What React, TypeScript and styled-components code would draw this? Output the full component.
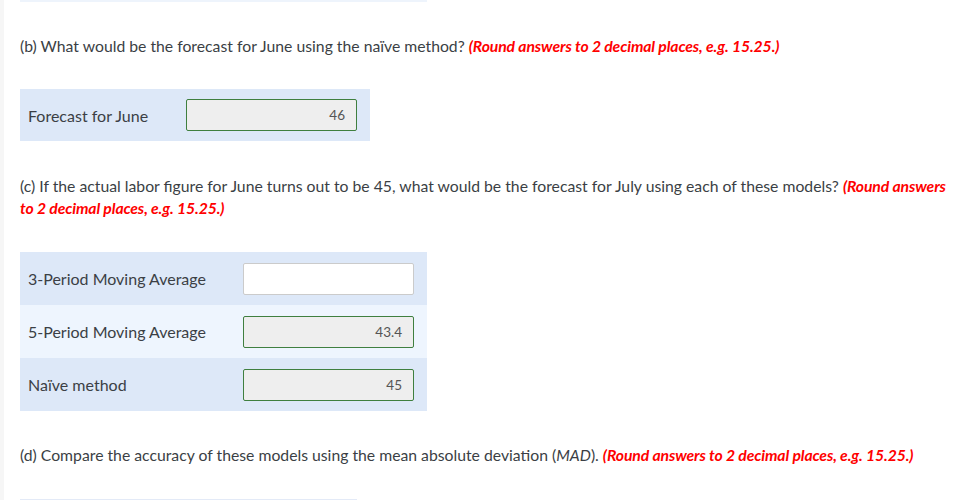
import React from "react";
import styled, { createGlobalStyle } from "styled-components";

const Global = createGlobalStyle`
  html, body { margin: 0; padding: 0; background: #fff; }
  body { font-family: Lato, "Noto Sans", sans-serif; color: #3b3f45; }
`;

const Page = styled.div`
  display: flex;
  min-height: 500px;
  overflow: hidden;
`;

const Gutter = styled.div`
  width: 4px;
  flex: 0 0 4px;
  background: #f6f6f6;
`;

const Content = styled.div`
  flex: 1;
  padding: 0 0 0 16px;
  display: flex;
  flex-direction: column;
`;

const TopBand = styled.div`
  width: 407px;
  height: 2px;
  background: #eef4fc;
`;

const Question = styled.p<{ $mt: number }>`
  margin: ${(p) => p.$mt}px 0 0 0;
  font-size: 15.75px;
  line-height: 22px;
  color: #3b3f45;
  width: 933px;
`;

const Hint = styled.span`
  color: #ff0000;
  font-weight: 700;
  font-style: italic;
  letter-spacing: -0.12px;
`;

const Em = styled.span`
  font-style: italic;
`;

const Table = styled.div<{ $w: number; $label: number; $mt: number }>`
  margin-top: ${(p) => p.$mt}px;
  width: ${(p) => p.$w}px;
  display: grid;
  grid-template-columns: ${(p) => p.$label}px 1fr;
`;

const Row = styled.div<{ $alt?: boolean }>`
  display: contents;
  & > * {
    background: ${(p) => (p.$alt ? "#eef5fe" : "#dde8f8")};
  }
`;

const Label = styled.div<{ $h?: number }>`
  height: ${(p) => p.$h ?? 53}px;
  padding-left: 8px;
  display: flex;
  align-items: center;
  font-size: 16px;
  color: #3b3f45;
`;

const Cell = styled.div<{ $h?: number }>`
  height: ${(p) => p.$h ?? 53}px;
  display: flex;
  align-items: center;
`;

const Field = styled.div<{ $filled?: boolean }>`
  box-sizing: border-box;
  width: 171px;
  height: 32px;
  border: 1px solid ${(p) => (p.$filled ? "#3f7f3f" : "#cbcbcb")};
  border-radius: 2px;
  background: ${(p) => (p.$filled ? "#eeeeee" : "#ffffff")};
  display: flex;
  align-items: center;
  justify-content: flex-end;
  padding-right: 11px;
  font-size: 13.5px;
  color: #555;
`;

const BottomBand = styled.div`
  margin-top: 33px;
  width: 337px;
  height: 2px;
  background: #e3eaf7;
`;

const hint = "(Round answers to 2 decimal places, e.g. 15.25.)";

export default function App() {
  return (
    <>
      <Global />
      <Page>
        <Gutter />
        <Content>
          <TopBand />
          <Question $mt={33}>
            (b) What would be the forecast for June using the naïve method? <Hint>{hint}</Hint>
          </Question>
          <Table $w={350} $label={166} $mt={32}>
            <Row>
              <Label $h={52}>Forecast for June</Label>
              <Cell $h={52}>
                <Field $filled>46</Field>
              </Cell>
            </Row>
          </Table>
          <Question $mt={34}>
            (c) If the actual labor figure for June turns out to be 45, what would be the forecast for July using each of these models?{" "}
            <Hint>{hint}</Hint>
          </Question>
          <Table $w={407} $label={223} $mt={33}>
            <Row>
              <Label>3-Period Moving Average</Label>
              <Cell>
                <Field />
              </Cell>
            </Row>
            <Row $alt>
              <Label>5-Period Moving Average</Label>
              <Cell>
                <Field $filled>43.4</Field>
              </Cell>
            </Row>
            <Row>
              <Label>Naïve method</Label>
              <Cell>
                <Field $filled>45</Field>
              </Cell>
            </Row>
          </Table>
          <Question $mt={33}>
            (d) Compare the accuracy of these models using the mean absolute deviation (<Em>MAD</Em>). <Hint>{hint}</Hint>
          </Question>
          <BottomBand />
        </Content>
      </Page>
    </>
  );
}
